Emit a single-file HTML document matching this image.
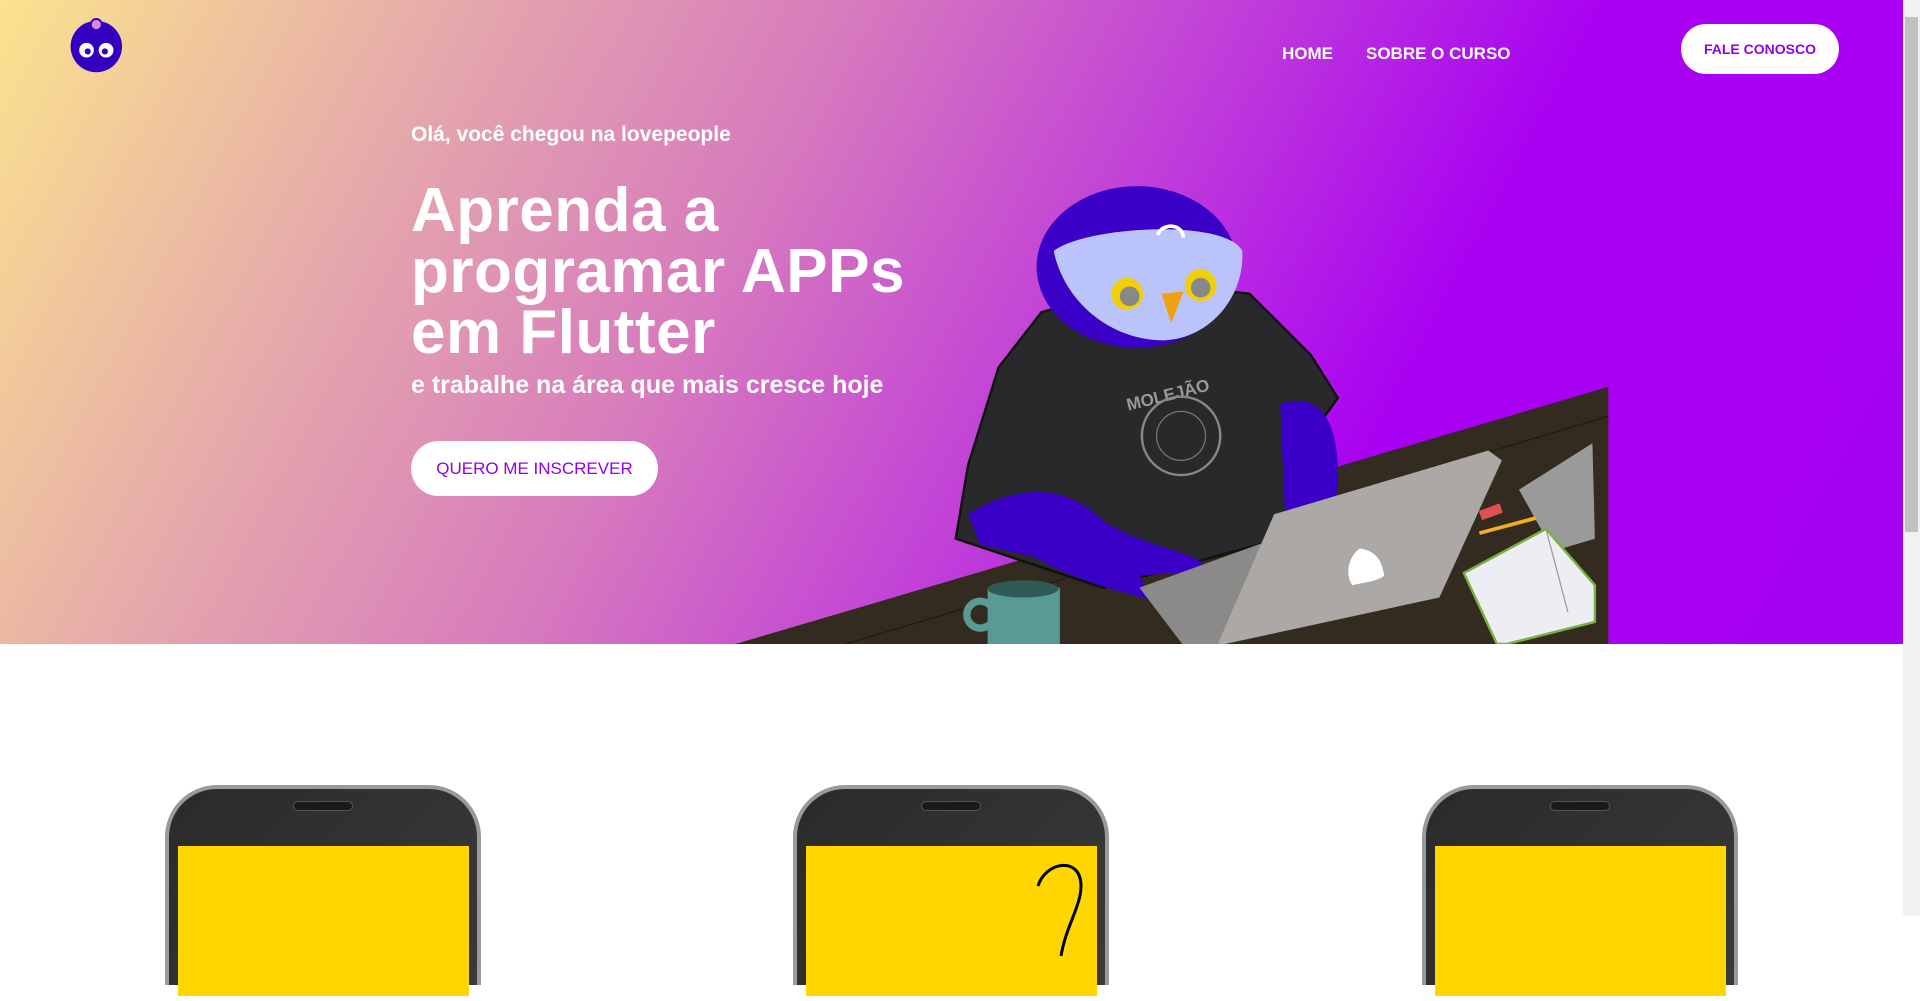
<!DOCTYPE html>
<html><head><meta charset="utf-8"><style>
*{margin:0;padding:0;box-sizing:border-box}
html,body{width:1920px;height:916px;overflow:hidden;background:#fff;font-family:"Liberation Sans",Arial,sans-serif}
.hero{position:absolute;left:0;top:0;width:1903px;height:644px;background:linear-gradient(118deg,#fbe38e 0%,#e4a5ad 22%,#d77bbd 38%,#c140d8 55%,#a800f2 72%,#a600f3 100%);overflow:hidden}
.hero svg{position:absolute;left:0;top:0}
.sb{position:absolute;right:0;top:0;width:17px;height:916px;background:#f1f1f1}
.sb i{position:absolute;left:2px;top:17px;width:13px;height:515px;background:#c1c1c1}
.nav{position:absolute;top:44px;color:#fff;font-weight:bold;font-size:17px}
.btn{position:absolute;background:#fff;border-radius:30px;color:#9000e8;display:flex;align-items:center;justify-content:center}
.t{position:absolute;left:411px;color:#fff;font-weight:bold}
.phone{position:absolute;top:785px;width:316px;height:200px;background:linear-gradient(135deg,#2a2a2a,#3a3a3a);border:4px solid #9a9a9a;border-radius:52px 52px 0 0;border-bottom:none}
.phone .spk{position:absolute;left:124px;top:12px;width:60px;height:10px;background:#1a1a1a;border-radius:5px;border:1px solid #555}
.phone .scr{position:absolute;left:9px;top:57px;width:291px;height:150px;background:#ffd600}
</style></head><body>
<div class="hero">
<svg width="1903" height="644" viewBox="0 0 1553 526">
<circle cx="78" cy="38" r="21" fill="#3300c0"/>
<circle cx="78" cy="20" r="4.5" fill="#d888e0" stroke="#3300c0" stroke-width="1.5"/>
<circle cx="70" cy="41" r="6" fill="#fff"/><circle cx="86" cy="41" r="6" fill="#fff"/>
<circle cx="71" cy="42" r="2.5" fill="#3300c0"/><circle cx="85" cy="42" r="2.5" fill="#3300c0"/>
<polygon points="600,526 1313,316 1313,526" fill="#332a20"/>
<polyline points="690,526 1313,340" stroke="#1e1812" stroke-width="0.8" fill="none"/>
<polygon points="1240,400 1300,362 1302,440 1268,450" fill="#9a9a9a"/>
<polygon points="1195,468 1262,432 1302,478 1302,508 1230,526 1222,526" fill="#eceef4" stroke="#7ab040" stroke-width="2"/>
<line x1="1262" y1="432" x2="1280" y2="500" stroke="#999" stroke-width="1"/>
<rect x="1208" y="414" width="18" height="8" fill="#e05050" transform="rotate(-20 1217 418)"/>
<rect x="1207" y="428" width="48" height="3" fill="#f0b020" transform="rotate(-15 1230 430)"/>
<path d="M850,255 C900,240 990,235 1020,240 L1070,290 L1092,325 L1060,370 L1045,440 L900,480 L780,440 L790,380 L815,300 Z" fill="#29292b" stroke="#111" stroke-width="2"/>
<path d="M1045,330 C1075,320 1090,340 1092,380 C1094,420 1080,440 1050,445 Z" fill="#3a00c8"/>
<path d="M790,420 C830,395 870,395 900,425 C930,445 970,450 982,460 C975,470 950,468 930,470 L940,490 C900,480 870,470 845,455 L800,445 Z" fill="#3a00c8"/>
<ellipse cx="928" cy="218" rx="82" ry="66" fill="#3a00c8"/>
<path d="M860,205 C885,185 1000,178 1014,205 C1016,240 990,276 950,278 C905,278 868,245 860,205 Z" fill="#bac4fa"/>
<circle cx="920" cy="240" r="13" fill="#f0d000"/><circle cx="980" cy="233" r="13" fill="#f0d000"/>
<circle cx="922" cy="242" r="8" fill="#888"/><circle cx="980" cy="235" r="8" fill="#888"/>
<path d="M948,240 L966,238 L956,264 Z" fill="#f0a010"/>
<path d="M945,192 C948,182 965,182 966,194" stroke="#fff" stroke-width="3" fill="none"/>
<text x="918" y="328" fill="#999" font-size="14" font-weight="bold" transform="rotate(-14 950 320)">MOLEJÃO</text>
<circle cx="964" cy="356" r="32" fill="none" stroke="#888" stroke-width="2"/>
<circle cx="964" cy="356" r="20" fill="none" stroke="#777" stroke-width="1"/>
<polygon points="930,480 1040,440 1000,526 965,526" fill="#8c8a88"/>
<polygon points="1040,420 1215,368 1226,376 1175,488 1000,526 994,526" fill="#aba8a5"/>
<path d="M1110,448 C1100,455 1098,470 1104,478 C1112,476 1125,475 1130,470 C1128,460 1125,450 1110,448 Z" fill="#fff"/>
<circle cx="800" cy="502" r="11" fill="none" stroke="#5a9a94" stroke-width="6"/>
<rect x="806" y="480" width="59" height="46" fill="#5a9a94"/>
<ellipse cx="835" cy="481" rx="29" ry="7" fill="#2f5a56"/>
</svg>
</div>
<div class="nav" style="left:1282px">HOME</div>
<div class="nav" style="left:1366px">SOBRE O CURSO</div>
<div class="btn" style="left:1681px;top:24px;width:158px;height:50px;font-size:14px;font-weight:bold">FALE CONOSCO</div>
<div class="t" style="top:123px;font-size:21px">Olá, você chegou na lovepeople</div>
<div class="t" style="top:180px;font-size:62px;line-height:61px;letter-spacing:0.5px">Aprenda a<br>programar APPs<br>em Flutter</div>
<div class="t" style="top:371px;font-size:25px">e trabalhe na área que mais cresce hoje</div>
<div class="btn" style="left:411px;top:441px;width:247px;height:55px;font-size:17px">QUERO ME INSCREVER</div>
<div class="phone" style="left:165px"><div class="spk"></div><div class="scr"></div></div>
<div class="phone" style="left:793px"><div class="spk"></div><div class="scr"><svg width="291" height="150"><path d="M232,40 C240,15 275,10 275,40 C275,60 260,80 255,110" stroke="#000" stroke-width="3" fill="none"/></svg></div></div>
<div class="phone" style="left:1422px"><div class="spk"></div><div class="scr"></div></div>
<div class="sb"><i></i></div>
</body></html>
